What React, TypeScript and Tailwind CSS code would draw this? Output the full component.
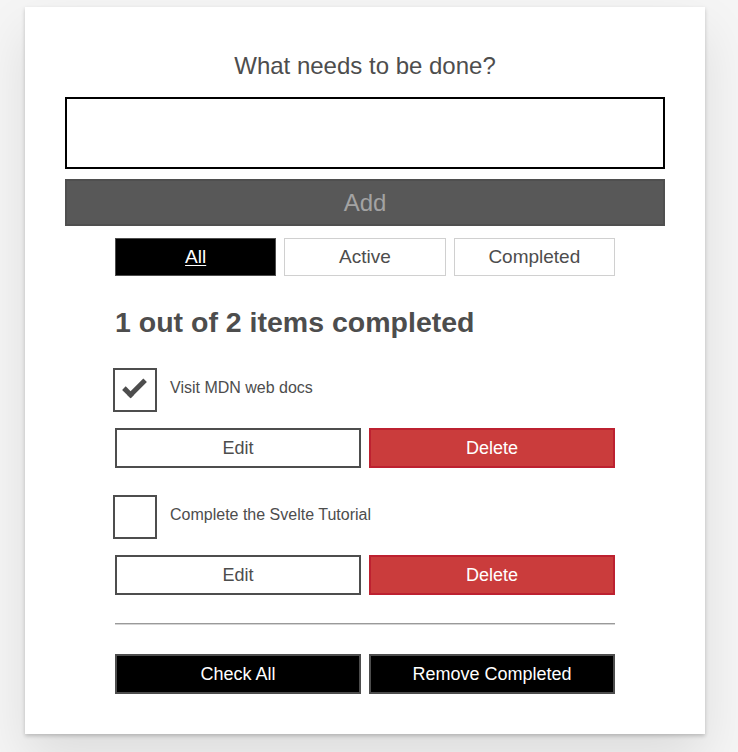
import { useState } from 'react';

type Todo = { id: number; name: string; completed: boolean };

const initialTodos: Todo[] = [
    { id: 1, name: 'Visit MDN web docs', completed: true },
    { id: 2, name: 'Complete the Svelte Tutorial', completed: false },
];

function TodoItem({ todo, onToggle }: { todo: Todo; onToggle: () => void }) {
    return (
        <li>
            <div className="flex h-[44px] items-center">
                <button
                    type="button"
                    onClick={onToggle}
                    className="relative -ml-[2px] h-[44px] w-[44px] shrink-0 border-2 border-[#4d4d4d] bg-white"
                    aria-label={todo.name}
                >
                    {todo.completed && (
                        <span className="absolute left-[8px] top-[10px] box-content h-[7px] w-[18px] -rotate-45 border-b-[5px] border-l-[5px] border-[#4d4d4d]" />
                    )}
                </button>
                <label className="pb-[5px] pl-[13px] text-[16px] leading-[20px]">{todo.name}</label>
            </div>
            <div className="mt-[16px] flex gap-[8px]">
                <button className="h-[40px] flex-1 border-2 border-[#4d4d4d] bg-white pt-[1px] text-[18px] text-[#4d4d4d]">
                    Edit
                </button>
                <button className="h-[40px] flex-1 border-2 border-[#bd2130] bg-[#ca3c3c] pt-[1px] text-[18px] text-white">
                    Delete
                </button>
            </div>
        </li>
    );
}

export default function App() {
    const [todos, setTodos] = useState(initialTodos);
    const [filter, setFilter] = useState('all');
    const [name, setName] = useState('');

    const done = todos.filter((t) => t.completed).length;
    const filters = [
        { key: 'all', label: 'All' },
        { key: 'active', label: 'Active' },
        { key: 'completed', label: 'Completed' },
    ];

    return (
        <div className="min-h-screen bg-[#f5f5f5] pb-[18px] pt-[7px] font-['Liberation_Sans',Arial,sans-serif] text-[#4d4d4d]">
            <div className="ml-[25px] w-[680px] bg-white p-[40px] shadow-[0_2px_4px_0_rgba(0,0,0,0.2),0_25px_50px_0_rgba(0,0,0,0.1)]">
                <h2 className="mb-[12px] text-center text-[24px] leading-[38px]">What needs to be done?</h2>
                <input
                    value={name}
                    onChange={(e) => setName(e.target.value)}
                    className="block h-[72px] w-full border-2 border-black px-5 text-[19px] outline-none"
                />
                <button
                    disabled={!name}
                    className="mt-[10px] h-[47px] w-full border-2 border-[#4f4f4f] bg-[#585858] text-[24px] text-[#a3a3a3]"
                >
                    Add
                </button>

                <div className="mx-auto mt-[12px] flex w-[500px] gap-[8px]">
                    {filters.map((f) =>
                        f.key === filter ? (
                            <button
                                key={f.key}
                                onClick={() => setFilter(f.key)}
                                className="h-[38px] flex-1 border border-[#4d4d4d] bg-black pt-[1px] text-[19px] text-white underline underline-offset-2"
                            >
                                {f.label}
                            </button>
                        ) : (
                            <button
                                key={f.key}
                                onClick={() => setFilter(f.key)}
                                className="h-[38px] flex-1 border border-[#d0d0d0] bg-white pt-[1px] text-[19px] text-[#4d4d4d]"
                            >
                                {f.label}
                            </button>
                        )
                    )}
                </div>

                <div className="mx-auto w-[500px]">
                    <h2 className="mt-[29px] text-[28.5px] font-bold leading-[34px]">
                        {done} out of {todos.length} items completed
                    </h2>
                    <ul className="mt-[29px] flex flex-col gap-[27px]">
                        {todos.map((t) => (
                            <TodoItem
                                key={t.id}
                                todo={t}
                                onToggle={() =>
                                    setTodos(todos.map((x) => (x.id === t.id ? { ...x, completed: !x.completed } : x)))
                                }
                            />
                        ))}
                    </ul>
                    <hr className="mt-[28px] h-[2px] border-0 border-t border-b border-t-[#9a9a9a] border-b-[#d4d4d4]" />
                    <div className="mt-[29px] flex gap-[8px]">
                        <button className="h-[40px] flex-1 border-2 border-[#4d4d4d] bg-black pt-[1px] text-[18px] text-white">
                            Check All
                        </button>
                        <button className="h-[40px] flex-1 border-2 border-[#4d4d4d] bg-black pt-[1px] text-[18px] text-white">
                            Remove Completed
                        </button>
                    </div>
                </div>
            </div>
        </div>
    );
}
